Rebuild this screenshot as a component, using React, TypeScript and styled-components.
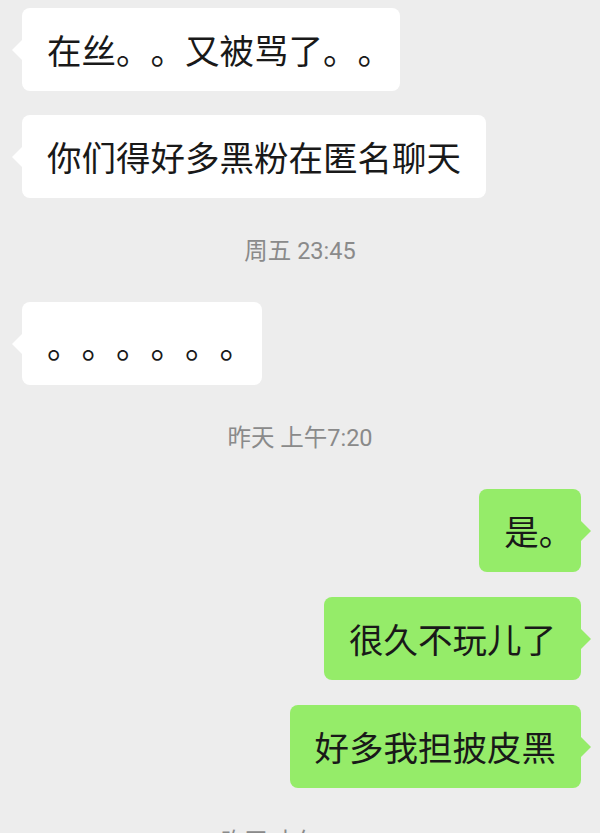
import styled, { createGlobalStyle } from 'styled-components';

const GlobalStyle = createGlobalStyle`
    html, body {
        margin: 0;
        padding: 0;
        background: #ededed;
    }
`;

const Screen = styled.div`
    height: 833px;
    overflow: hidden;
    background: #ededed;
    padding-top: 8px;
    box-sizing: border-box;
    font-family: 'Noto Sans CJK SC', 'Noto Sans', sans-serif;
    color: #191919;
`;

const Row = styled.div<{ $mine: boolean }>`
    display: flex;
    justify-content: ${(p) => (p.$mine ? 'flex-end' : 'flex-start')};
    padding: ${(p) => (p.$mine ? '0 19px 0 0' : '0 0 0 22px')};
    margin-bottom: ${(p) => (p.$mine ? '25px' : '24px')};
`;

const Bubble = styled.div<{ $mine: boolean }>`
    position: relative;
    background: ${(p) => (p.$mine ? '#95ec69' : '#ffffff')};
    border-radius: 8px;
    padding: 17px 25px 18px 25px;
    font-size: 34.5px;
    line-height: 48px;
    white-space: nowrap;
    text-spacing-trim: space-all;

    &::before {
        content: '';
        position: absolute;
        top: 32px;
        ${(p) => (p.$mine ? 'right: -10px;' : 'left: -10px;')}
        width: 0;
        height: 0;
        border-top: 10px solid transparent;
        border-bottom: 10px solid transparent;
        ${(p) =>
            p.$mine
                ? 'border-left: 10px solid #95ec69;'
                : 'border-right: 10px solid #ffffff;'}
    }
`;

const HalfPunct = styled.span`
    font-feature-settings: 'halt';
`;

const Time = styled.div`
    text-align: center;
    font-family: Roboto, 'Noto Sans CJK SC', sans-serif;
    font-size: 23.5px;
    line-height: 26px;
    color: #8a8a8a;
    padding: 17px 0 38px;
    margin-top: -1px;
`;

type Item =
    | { kind: 'msg'; mine: boolean; text: string }
    | { kind: 'time'; text: string };

const items: Item[] = [
    { kind: 'msg', mine: false, text: '在丝。。又被骂了。。' },
    { kind: 'msg', mine: false, text: '你们得好多黑粉在匿名聊天' },
    { kind: 'time', text: '周五 23:45' },
    { kind: 'msg', mine: false, text: '。。。。。。' },
    { kind: 'time', text: '昨天 上午7:20' },
    { kind: 'msg', mine: true, text: '是。' },
    { kind: 'msg', mine: true, text: '很久不玩儿了' },
    { kind: 'msg', mine: true, text: '好多我担披皮黑' },
    { kind: 'time', text: '昨天 中午12:44' },
];

// the last closing mark of a line is set half width, as on the phone
function MessageText({ text }: { text: string }) {
    if (text.endsWith('。')) {
        return (
            <>
                {text.slice(0, -1)}
                <HalfPunct>。</HalfPunct>
            </>
        );
    }
    return <>{text}</>;
}

export default function App() {
    return (
        <>
            <GlobalStyle />
            <Screen>
                {items.map((item, i) =>
                    item.kind === 'time' ? (
                        <Time key={i}>{item.text}</Time>
                    ) : (
                        <Row key={i} $mine={item.mine}>
                            <Bubble $mine={item.mine}>
                                <MessageText text={item.text} />
                            </Bubble>
                        </Row>
                    )
                )}
            </Screen>
        </>
    );
}
